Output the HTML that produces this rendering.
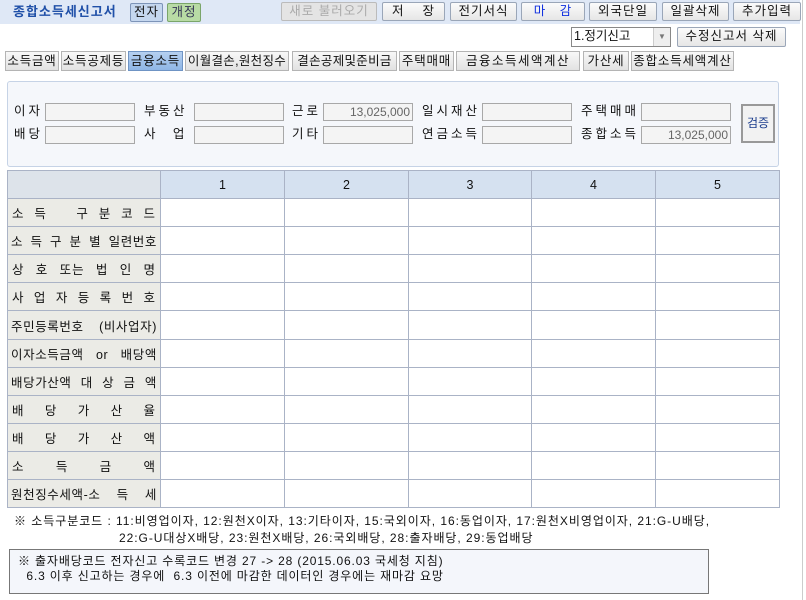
<!DOCTYPE html>
<html><head><meta charset="utf-8"><style>
*{box-sizing:border-box;margin:0;padding:0}
body{width:806px;height:600px;background:#fff;font-family:"Liberation Sans","Noto Sans CJK KR","NanumGothic",sans-serif;font-size:12px;color:#111;position:relative;overflow:hidden}
.a{position:absolute}
.top{left:0;top:0;width:800px;height:24px;background:#dfe8f6}
.btn{position:absolute;height:19px;border:1px solid #9aa6b8;border-radius:2px;background:linear-gradient(#fbfbfb,#e6e6e6);text-align:center;line-height:17px;font-size:12.5px;letter-spacing:1px;white-space:pre}
.tab{position:absolute;top:51px;height:20px;border:1px solid #b4b4b4;background:linear-gradient(#f8f8f8,#e2e2e2);text-align:center;line-height:18px;font-size:12.5px;letter-spacing:0.8px;white-space:nowrap;overflow:hidden}
.inp{position:absolute;height:18px;border:1px solid #a8a8a8;background:#f4f4f4;text-align:right;padding-right:2px;line-height:16px;color:#666}
.lb{position:absolute;font-size:12.5px;line-height:18px;letter-spacing:3px}
table{position:absolute;left:7px;top:170px;width:772px;border-collapse:collapse;table-layout:fixed}
td{border:1px solid #aab3c6;height:28.1px;font-size:12.5px}
td.h{background:#d5e1f0;text-align:center}
td.l{background:#ebebe6;padding:0 4px;text-align:justify;text-align-last:justify;white-space:nowrap;letter-spacing:1px;overflow:hidden}
td.n{letter-spacing:0.6px;padding:0 3px}
</style></head><body>
<div class="a top"></div>
<div class="a" style="left:13px;top:3px;font-weight:bold;color:#2050a8;font-size:13px;line-height:18px;letter-spacing:1px">종합소득세신고서</div>
<div class="btn" style="left:130px;top:3px;width:33px;background:#c5d7ef;border-color:#7d94b8">전자</div>
<div class="btn" style="left:167px;top:3px;width:34px;background:#b8dba5;border-color:#7aa56a;color:#335">개정</div>
<div class="btn" style="left:281px;top:2px;width:96px;color:#aaa;background:#e4e4e4;border-color:#bbb">새로 불러오기</div>
<div class="btn" style="left:382px;top:2px;width:63px">저    장</div>
<div class="btn" style="left:450px;top:2px;width:67px">전기서식</div>
<div class="btn" style="left:521px;top:2px;width:64px;color:#1030e0">마   감</div>
<div class="btn" style="left:589px;top:2px;width:68px">외국단일</div>
<div class="btn" style="left:662px;top:2px;width:67px">일괄삭제</div>
<div class="btn" style="left:733px;top:2px;width:68px">추가입력</div>
<div class="a" style="left:802px;top:0;width:1px;height:600px;background:#ccc"></div>

<div class="a" style="left:571px;top:27px;width:100px;height:20px;border:1px solid #888;background:#fff;line-height:17px;padding-left:2px;font-size:12.5px">1.정기신고</div>
<div class="a" style="left:653px;top:28px;width:17px;height:18px;background:#eee;border-left:1px solid #ccc;color:#777;font-size:8px;text-align:center;line-height:18px">▼</div>
<div class="btn" style="left:677px;top:27px;width:109px;height:20px">수정신고서 삭제</div>

<div class="tab" style="left:5px;width:54px">소득금액</div>
<div class="tab" style="left:61px;width:65px">소득공제등</div>
<div class="tab" style="left:128px;width:55px;background:linear-gradient(#b5d0f0,#8fb6e6);border-color:#6f94c4">금융소득</div>
<div class="tab" style="left:185px;width:104px;letter-spacing:0.3px">이월결손,원천징수</div>
<div class="tab" style="left:292px;width:105px;letter-spacing:0.3px">결손공제및준비금</div>
<div class="tab" style="left:399px;width:55px">주택매매</div>
<div class="tab" style="left:456px;width:124px;letter-spacing:1.5px">금융소득세액계산</div>
<div class="tab" style="left:583px;width:46px">가산세</div>
<div class="tab" style="left:631px;width:103px">종합소득세액계산</div>

<div class="a" style="left:7px;top:81px;width:772px;height:86px;background:#f5f7fb;border:1px solid #c6d3e6;border-radius:3px"></div>
<div class="lb" style="left:14px;top:102px">이자</div>
<div class="inp" style="left:45px;top:103px;width:90px"></div>
<div class="lb" style="left:144px;top:102px">부동산</div>
<div class="inp" style="left:194px;top:103px;width:90px"></div>
<div class="lb" style="left:292px;top:102px">근로</div>
<div class="inp" style="left:323px;top:103px;width:90px">13,025,000</div>
<div class="lb" style="left:422px;top:102px">일시재산</div>
<div class="inp" style="left:482px;top:103px;width:90px"></div>
<div class="lb" style="left:581px;top:102px">주택매매</div>
<div class="inp" style="left:641px;top:103px;width:90px"></div>
<div class="lb" style="left:14px;top:125px">배당</div>
<div class="inp" style="left:45px;top:126px;width:90px"></div>
<div class="lb" style="left:144px;top:125px;letter-spacing:0">사 &nbsp; &nbsp; 업</div>
<div class="inp" style="left:194px;top:126px;width:90px"></div>
<div class="lb" style="left:292px;top:125px">기타</div>
<div class="inp" style="left:323px;top:126px;width:90px"></div>
<div class="lb" style="left:422px;top:125px">연금소득</div>
<div class="inp" style="left:482px;top:126px;width:90px"></div>
<div class="lb" style="left:581px;top:125px">종합소득</div>
<div class="inp" style="left:641px;top:126px;width:90px">13,025,000</div>
<div class="a" style="left:741px;top:104px;width:34px;height:39px;border:2px solid #999;background:#f2f2f2;color:#1a3c8c;text-align:center;line-height:35px">검증</div>

<table>
<colgroup><col style="width:153px"><col style="width:124px"><col style="width:124px"><col style="width:123px"><col style="width:124px"><col style="width:124px"></colgroup>
<tr><td style="background:#dde3ea"></td><td class="h">1</td><td class="h">2</td><td class="h">3</td><td class="h">4</td><td class="h">5</td></tr>
<tr><td class="l">소 득 &nbsp; 구 분 코 드</td><td></td><td></td><td></td><td></td><td></td></tr>
<tr><td class="l n">소 득 구 분 별 일련번호</td><td></td><td></td><td></td><td></td><td></td></tr>
<tr><td class="l">상 호 또는 법 인 명</td><td></td><td></td><td></td><td></td><td></td></tr>
<tr><td class="l">사 업 자 등 록 번 호</td><td></td><td></td><td></td><td></td><td></td></tr>
<tr><td class="l n">주민등록번호 (비사업자)</td><td></td><td></td><td></td><td></td><td></td></tr>
<tr><td class="l n">이자소득금액 or 배당액</td><td></td><td></td><td></td><td></td><td></td></tr>
<tr><td class="l n">배당가산액 대 상 금 액</td><td></td><td></td><td></td><td></td><td></td></tr>
<tr><td class="l">배 당 가 산 율</td><td></td><td></td><td></td><td></td><td></td></tr>
<tr><td class="l">배 당 가 산 액</td><td></td><td></td><td></td><td></td><td></td></tr>
<tr><td class="l">소 득 금 액</td><td></td><td></td><td></td><td></td><td></td></tr>
<tr><td class="l n">원천징수세액-소 득 세</td><td></td><td></td><td></td><td></td><td></td></tr>
</table>

<div class="a" style="left:14px;top:513px;font-size:12px;line-height:17px;letter-spacing:0.95px;white-space:pre">※ 소득구분코드 : 11:비영업이자, 12:원천X이자, 13:기타이자, 15:국외이자, 16:동업이자, 17:원천X비영업이자, 21:G-U배당,</div>
<div class="a" style="left:119px;top:530px;font-size:12px;line-height:17px;letter-spacing:0.95px;white-space:pre">22:G-U대상X배당, 23:원천X배당, 26:국외배당, 28:출자배당, 29:동업배당</div>
<div class="a" style="left:9px;top:549px;width:700px;height:45px;border:1px solid #777;background:#f4f6fb;padding:4px 0 0 8px;font-size:12px;line-height:15px;letter-spacing:0.85px;white-space:pre">※ 출자배당코드 전자신고 수록코드 변경 27 -> 28 (2015.06.03 국세청 지침)
  6.3 이후 신고하는 경우에  6.3 이전에 마감한 데이터인 경우에는 재마감 요망</div>
</body></html>
